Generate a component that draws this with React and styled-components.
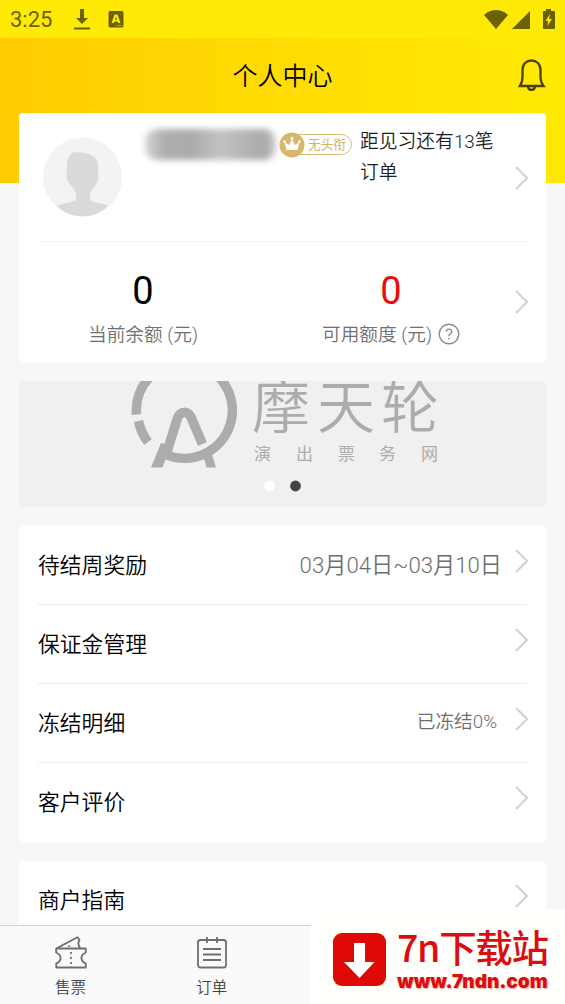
import React from 'react';
import styled, { createGlobalStyle } from 'styled-components';

const GlobalStyle = createGlobalStyle`
  * {
    box-sizing: border-box;
  }
  body {
    margin: 0;
    background: #f7f7f7;
    font-family: Roboto, 'Noto Sans CJK SC', sans-serif;
    font-weight: 350;
    color: #000;
  }
  svg {
    display: block;
    flex-shrink: 0;
  }
`;

const Page = styled.div`
  width: 565px;
  height: 1004px;
  display: flex;
  flex-direction: column;
  overflow: hidden;
  position: relative;
  background: linear-gradient(90deg, #ffcc00, #ffdc03 50%, #ffea05) 0 0 / 100% 183px no-repeat #f7f7f7;
`;

const StatusBar = styled.div`
  height: 38px;
  flex-shrink: 0;
  display: flex;
  align-items: center;
  padding: 0 9px 0 10px;
  background: #ffe906;
  color: #6b6103;
`;

const Time = styled.span`
  width: 64px;
  font-size: 22px;
  font-weight: 400;
  line-height: 38px;
  padding-top: 2px;
`;

const StatusRight = styled.div`
  display: flex;
  margin-left: auto;
`;

const Header = styled.div`
  height: 75px;
  flex-shrink: 0;
  display: grid;
  grid-template-columns: 1fr auto 1fr;
  align-items: center;
  padding: 0 19px;
`;

const Title = styled.div`
  grid-column: 2;
  padding-top: 2px;
  font-size: 25px;
  line-height: 36px;
`;

const BellButton = styled.div`
  justify-self: end;
  padding-bottom: 1px;
`;

const Content = styled.div`
  flex: 1;
  min-height: 0;
  overflow: hidden;
  display: flex;
  flex-direction: column;
  gap: 19px;
  padding: 0 19px;
`;

const Card = styled.div`
  flex-shrink: 0;
  background: #fff;
  border-radius: 4px;
`;

const Profile = styled.div`
  height: 129px;
  margin: 0 18px 0 20px;
  display: flex;
  align-items: flex-start;
  border-bottom: 1px solid #f2f2f2;
`;

const Avatar = styled.div`
  margin: 24px 23px 0 4px;
`;

const NameMask = styled.div`
  width: 131px;
  height: 31px;
  margin: 16px 4px 0 0;
  border-radius: 12px;
  background: linear-gradient(90deg, #d5d5d5, #aeaeae 15%, #aaa 35%, #c2c2c2 58%, #b2b2b2 78%, #aaa 92%, #d2d2d2);
  filter: blur(3px);
`;

const Badge = styled.div`
  display: flex;
  align-items: center;
  width: 72px;
  height: 21px;
  margin-top: 21px;
  border: 1.5px solid #d7bd73;
  border-radius: 11px;
  color: #d3b365;
  font-size: 12.7px;
  font-weight: 400;
  line-height: 18px;
  white-space: nowrap;

  svg {
    margin: 0 3px 0 -2px;
  }
`;

const Progress = styled.div`
  width: 140px;
  margin: 14px 0 0 8px;
  font-size: 18.8px;
  line-height: 31px;
  color: #1c1c22;
`;

const ProfileArrow = styled.div`
  margin: 53px 0 0 auto;
`;

const Balance = styled.div`
  height: 120px;
  display: grid;
  grid-template-columns: 248px 248px 1fr;
`;

const Account = styled.div`
  text-align: center;
`;

const Amount = styled.div`
  margin-top: 26px;
  font-size: 38px;
  font-weight: 400;
  line-height: 46px;
  color: ${(props) => props.$color || '#000'};
`;

const AccountLabel = styled.div`
  display: flex;
  justify-content: center;
  align-items: center;
  gap: 6px;
  margin-top: 6px;
  font-size: 18.7px;
  line-height: 30px;
  color: #707070;

  svg {
    margin-top: -2px;
  }
`;

const BalanceArrow = styled.div`
  margin: 48px 0 0 0;
`;

const Banner = styled.div`
  height: 126px;
  flex-shrink: 0;
  overflow: hidden;
  border-radius: 4px;
  background: #f0f0f0;
`;

const Row = styled.div`
  height: 79px;
  margin: 0 19px;
  display: flex;
  align-items: center;
  border-bottom: 1px solid ${(props) => (props.$last ? 'transparent' : '#ececec')};
  font-size: 21.8px;
`;

const RowLabel = styled.span`
  margin-top: -4px;
`;

const RowValue = styled.span`
  margin: ${(props) => (props.$small ? '-7px 18px 0 auto' : '-4px 13px 0 auto')};
  font-size: ${(props) => (props.$small ? '18.7px' : '22.2px')};
  color: #6e6e6e;
`;

const RowArrow = styled.div`
  margin: -8px -1px 0 ${(props) => (props.$alone ? 'auto' : '0')};
`;

const TabBar = styled.div`
  height: 79px;
  flex-shrink: 0;
  display: grid;
  grid-template-columns: repeat(4, 141.25px);
  border-top: 1px solid #d4d4d4;
  background: #fafafa;
`;

const Tab = styled.div`
  display: flex;
  flex-direction: column;
  align-items: center;
  padding-top: 10px;
  font-size: 15.5px;
  line-height: 24px;
  color: #444;

  svg {
    margin-bottom: 7px;
  }
`;

// floats over the right half of the tab bar
const SitePromo = styled.div`
  position: absolute;
  right: 0;
  bottom: 0;
  width: 254px;
  height: 95px;
  display: flex;
  align-items: flex-start;
  padding: 24px 0 0 22px;
  gap: 11px;
  background: #fffffb;
  color: #dc0d10;
`;

const SiteText = styled.div`
  white-space: nowrap;
`;

const SiteName = styled.div`
  margin-top: -9px;
  font-family: 'Noto Sans CJK SC', sans-serif;
  font-size: 37.5px;
  font-weight: 500;
  line-height: 43px;
  letter-spacing: -1.3px;
`;

const SiteUrl = styled.div`
  margin-top: 4px;
  font-family: Inter, 'Liberation Sans', sans-serif;
  font-size: 19px;
  font-weight: 900;
  line-height: 22px;
  text-shadow: 1px 1px 1px #f3b3b3;
`;

const Arrow = () => (
  <svg width="13" height="24" viewBox="0 0 13 24" fill="none" stroke="#d2d2d2" strokeWidth="2">
    <path d="M1 1L12 12L1 23" />
  </svg>
);

const DownloadIcon = () => (
  <svg width="16" height="21" viewBox="0 0 16 21" fill="#6b6103">
    <path d="M6 0h4v9h4l-6 6l-6-6h4zM0 18.5h16v2H0z" />
  </svg>
);

const AppIcon = () => (
  <svg width="34" height="17" viewBox="-18.5 0 34 17">
    <rect width="15" height="16.5" rx="1.5" fill="#6b6103" />
    <path
      d="M6 3.500H9L12 12H9.600L9.100 10.400H5.900L5.400 12H3ZM7.500 5.800L6.500 8.800H8.500Z"
      fill="#ffe906"
      fillRule="evenodd"
    />
    <path d="M8 14.6h6" stroke="#d6c304" strokeWidth="1" strokeDasharray="1.4 .6" />
  </svg>
);

const StatusIcons = () => (
  <svg width="72" height="21" viewBox="0 0 72 21" fill="#6b6103">
    <path d="M0 6C7-0.8 17-0.8 24 6L12 20z" />
    <path d="M46 2v18H28z" />
    <path d="M62 2V0h5v2h3q1 0 1 1v16q0 1-1 1H60q-1 0-1-1V3q0-1 1-1z" />
    <path d="M66 5l-4.5 7h2.7l-.9 5.2l4.6-7.2h-2.8z" fill="#ffe906" />
  </svg>
);

const BellIcon = () => (
  <svg width="28" height="32" viewBox="0 0 28 32" fill="none" stroke="#4a4205" strokeWidth="2.3">
    <path d="M2 27C4 24 4.5 21 4.5 17V11C4.5 5 8.5 1.500 13.5 1.500S22.5 5 22.500 11V17C22.500 21 23 24 25.500 27z" />
    <path d="M10 27.500C10.500 32 16.500 32 17 27.500" />
  </svg>
);

const AvatarIcon = () => (
  <svg width="79" height="80" viewBox="0 0 79 80">
    <circle cx="39.5" cy="40" r="39.5" fill="#f3f3f3" />
    <path
      d="M30 15.5C36 15 43 15 48 18C56 21 55 27 55.5 41C55 47 48 51 47 58V63C52 66 59 66 65 69C51 83 28 83 14 69C19 66 27 66 33 63V57C31 50 24 46 23.5 41C24 31 23 22 27 19C28 18 28 16 30 15.5Z"
      fill="#dadada"
    />
  </svg>
);

const CrownIcon = () => (
  <svg width="26" height="26" viewBox="0 0 26 26">
    <circle cx="13" cy="13" r="12.5" fill="#d7b76b" />
    <path d="M7.5 18L5.5 10L10 13L13 7L16 13L20.5 10L18.5 18Z" fill="#fff" />
    <circle cx="5.5" cy="9.5" r="1.3" fill="#fff" />
    <circle cx="13" cy="6.5" r="1.4" fill="#fff" />
    <circle cx="20.5" cy="9.5" r="1.3" fill="#fff" />
  </svg>
);

const HelpIcon = () => (
  <svg width="22" height="22" viewBox="0 0 22 22" fill="none" stroke="#8c8c8c" strokeWidth="1.4">
    <circle cx="11" cy="11" r="9.8" />
    <path d="M8.3 8.8C8.3 5.2 13.7 5.2 13.7 8.7C13.7 10.8 11 10.8 11 13.3M11 14.8V16.5" />
  </svg>
);

const BannerLogo = () => (
  <svg width="527" height="126" viewBox="19 381 527 126">
    <g fill="none" stroke="#acacac" strokeWidth="9.5">
      <path d="M136.5 414.5A48 48 0 1 1 165.5 454.5" />
      <path d="M138.5 421Q141 433 148 442" />
      <path d="M165 458L176 423C179 409 189 409 193 422L202.5 444" />
    </g>
    <path d="M161 443L171 446L162.500 467.500H151ZM203 455L211 451L216 467.500H206.500Z" fill="#acacac" />
    <g fill="#acacac" fontFamily="'Noto Sans CJK SC', sans-serif">
      <text x="252 317 381" y="428" fontSize="58" fontWeight="350">摩天轮</text>
      <text x="254 296 338 379 421" y="460" fontSize="17" fontWeight="400">演出票务网</text>
    </g>
    <circle cx="269.5" cy="486" r="5.3" fill="#fff" />
    <circle cx="295.5" cy="486" r="5.4" fill="#444" />
  </svg>
);

const TicketIcon = () => (
  <svg width="32" height="33" viewBox="0 0 32 33" fill="none" stroke="#6e6e6e" strokeWidth="1.8" strokeLinejoin="round">
    <path d="M1.2 12.5H30.8V16.5C25 19 25 25 30.8 27.5V31.5H1.2V27.5C7 25 7 19 1.2 16.500V12.500L22.500 1.300L24.500 4C22.500 7 23.500 9 25 12" />
    <path d="M16 16v2M16 21v2M16 26v2M14 9.500v1.500" />
  </svg>
);

const OrderIcon = () => (
  <svg width="30" height="33" viewBox="0 0 30 33" fill="none" stroke="#6e6e6e" strokeWidth="1.8">
    <rect x="1" y="4" width="28" height="27.5" rx="2.5" />
    <path d="M10 1v6M20 1v6M6 13h18M6 18.5h18M6 24h18" />
  </svg>
);

const SiteIcon = () => (
  <svg width="53" height="54" viewBox="0 0 53 54">
    <rect width="53" height="53" rx="9" fill="#df0906" />
    <path d="M21 10H32V29H41.5L26.5 45L11 29H21Z" fill="#fff" />
  </svg>
);

const rows = [
  { label: '待结周奖励', value: '03月04日~03月10日' },
  { label: '保证金管理' },
  { label: '冻结明细', value: '已冻结0%', small: true },
  { label: '客户评价' },
];

const MenuRow = ({ label, value, small, last }) => (
  <Row $last={last}>
    <RowLabel>{label}</RowLabel>
    {value && <RowValue $small={small}>{value}</RowValue>}
    <RowArrow $alone={!value}>
      <Arrow />
    </RowArrow>
  </Row>
);

const App = () => {
  return (
    <>
      <GlobalStyle />
      <Page>
        <StatusBar>
          <Time>3:25</Time>
          <DownloadIcon />
          <AppIcon />
          <StatusRight>
            <StatusIcons />
          </StatusRight>
        </StatusBar>
        <Header>
          <Title>个人中心</Title>
          <BellButton>
            <BellIcon />
          </BellButton>
        </Header>
        <Content>
          <Card>
            <Profile>
              <Avatar>
                <AvatarIcon />
              </Avatar>
              <NameMask />
              <Badge>
                <CrownIcon />
                无头衔
              </Badge>
              <Progress>距见习还有13笔订单</Progress>
              <ProfileArrow>
                <Arrow />
              </ProfileArrow>
            </Profile>
            <Balance>
              <Account>
                <Amount>0</Amount>
                <AccountLabel>当前余额 (元)</AccountLabel>
              </Account>
              <Account>
                <Amount $color="#eb0b0b">0</Amount>
                <AccountLabel>
                  可用额度 (元)
                  <HelpIcon />
                </AccountLabel>
              </Account>
              <BalanceArrow>
                <Arrow />
              </BalanceArrow>
            </Balance>
          </Card>
          <Banner>
            <BannerLogo />
          </Banner>
          <Card>
            {rows.map((row, i) => (
              <MenuRow key={row.label} {...row} last={i === rows.length - 1} />
            ))}
          </Card>
          <Card>
            <MenuRow label="商户指南" last />
          </Card>
        </Content>
        <TabBar>
          <Tab>
            <TicketIcon />
            售票
          </Tab>
          <Tab>
            <OrderIcon />
            订单
          </Tab>
        </TabBar>
        <SitePromo>
          <SiteIcon />
          <SiteText>
            <SiteName>7n下载站</SiteName>
            <SiteUrl>www.7ndn.com</SiteUrl>
          </SiteText>
        </SitePromo>
      </Page>
    </>
  );
};

export default App;
